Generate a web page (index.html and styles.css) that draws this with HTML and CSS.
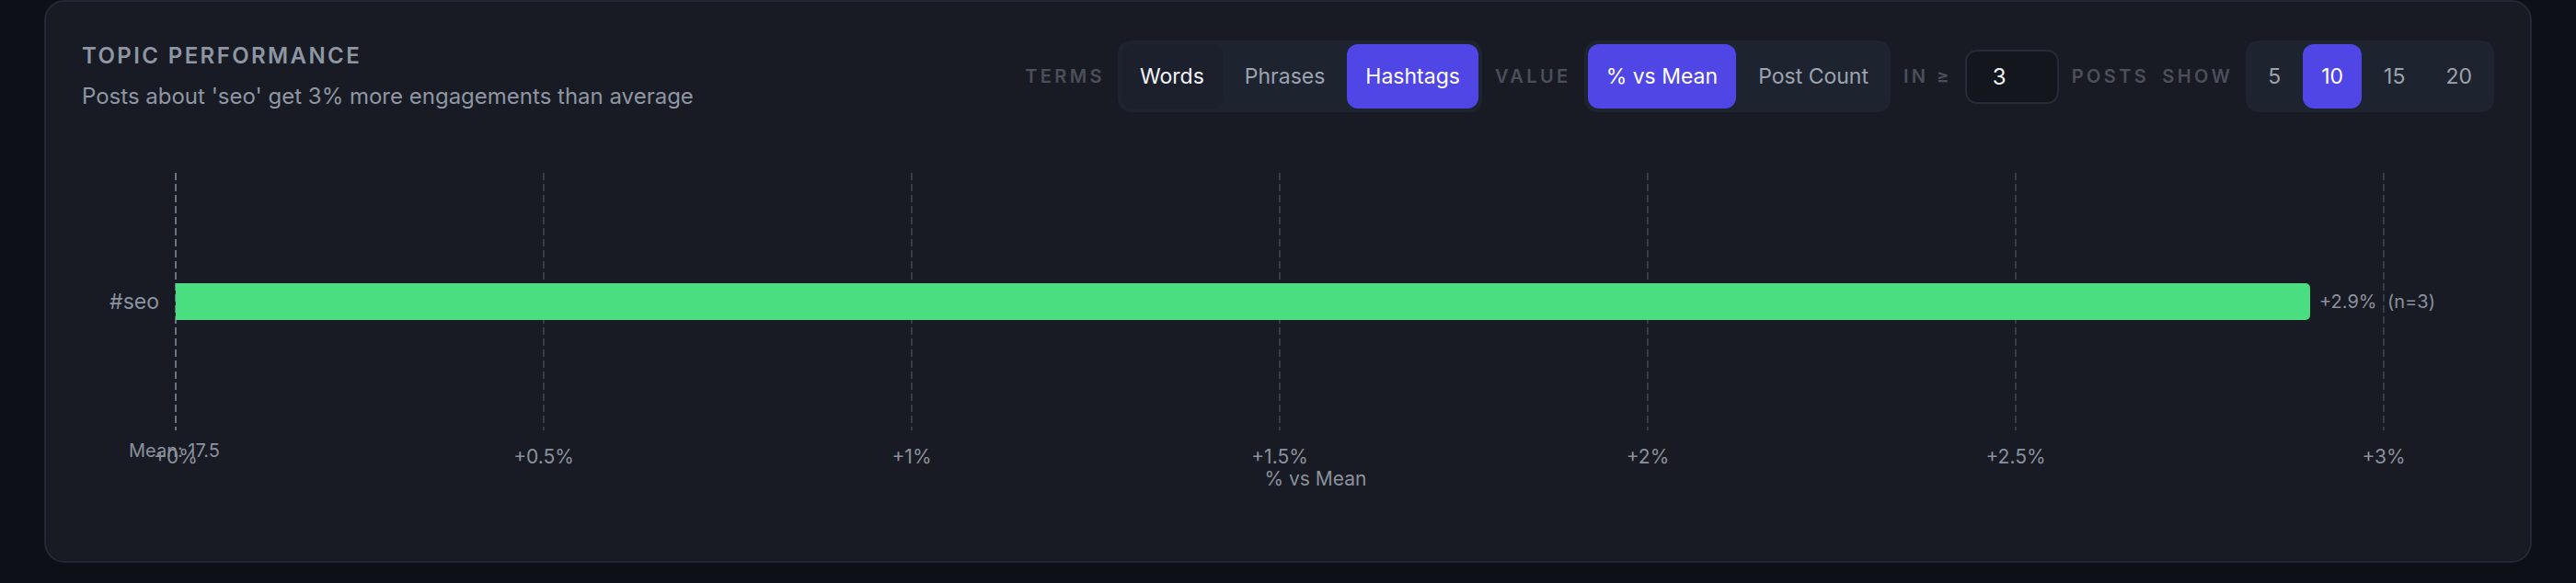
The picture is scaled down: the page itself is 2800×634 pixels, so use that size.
FILE: index.html
```html
<!DOCTYPE html>
<html lang="en">
<head>
    <meta charset="UTF-8">
    <meta name="viewport" content="width=device-width, initial-scale=1.0">
    <title>Topic Performance</title>
    <link rel="stylesheet" href="styles.css">
</head>
<body>
    <div class="card">
        <div class="card-header">
            <div class="heading">
                <h2>Topic Performance</h2>
                <p>Posts about 'seo' get 3% more engagements than average</p>
            </div>
            <div class="controls">
                <span class="ctl-label">Terms</span>
                <div class="seg">
                    <button class="seg-btn hover">Words</button>
                    <button class="seg-btn">Phrases</button>
                    <button class="seg-btn active">Hashtags</button>
                </div>
                <span class="ctl-label">Value</span>
                <div class="seg">
                    <button class="seg-btn active">% vs Mean</button>
                    <button class="seg-btn">Post Count</button>
                </div>
                <span class="ctl-label">In ≥</span>
                <input class="min-input" type="text" value="3">
                <span class="ctl-label">Posts</span>
                <span class="ctl-label">Show</span>
                <div class="seg">
                    <button class="seg-btn num">5</button>
                    <button class="seg-btn num active">10</button>
                    <button class="seg-btn num">15</button>
                    <button class="seg-btn num">20</button>
                </div>
            </div>
        </div>

        <svg class="chart" viewBox="0 0 2622 420" width="2622" height="420">
            <!-- grid -->
            <g class="grid">
                <line x1="502" y1="48" x2="502" y2="328"></line>
                <line x1="902" y1="48" x2="902" y2="328"></line>
                <line x1="1302" y1="48" x2="1302" y2="328"></line>
                <line x1="1702" y1="48" x2="1702" y2="328"></line>
                <line x1="2102" y1="48" x2="2102" y2="328"></line>
                <line x1="2502" y1="48" x2="2502" y2="328"></line>
            </g>
            <line class="zero-line" x1="102" y1="48" x2="102" y2="328"></line>

            <!-- bar: 2.9 / 3 * 2400 -->
            <path class="bar" d="M102 168 H2417 a5 5 0 0 1 5 5 V203 a5 5 0 0 1 -5 5 H102 Z"></path>
            <text class="row-label" x="84" y="196" text-anchor="end">#seo</text>
            <text class="val-label" x="2432" y="195">+2.9%</text>
            <text class="val-label" x="2506" y="195">(n=3)</text>

            <!-- x axis -->
            <g class="tick">
                <text x="102" y="364" text-anchor="middle">+0%</text>
                <text x="502" y="364" text-anchor="middle">+0.5%</text>
                <text x="902" y="364" text-anchor="middle">+1%</text>
                <text x="1302" y="364" text-anchor="middle">+1.5%</text>
                <text x="1702" y="364" text-anchor="middle">+2%</text>
                <text x="2102" y="364" text-anchor="middle">+2.5%</text>
                <text x="2502" y="364" text-anchor="middle">+3%</text>
            </g>
            <text class="mean-label" x="51" y="357">Mean: 17.5</text>
            <text class="axis-title" x="1341" y="388" text-anchor="middle">% vs Mean</text>
        </svg>
    </div>
</body>
</html>
```
FILE: styles.css
```css
body {
    margin: 0;
    padding: 0 48px;
    background: #0d1017;
    font-family: Inter, "Noto Sans", sans-serif;
}
.card {
    background: #181b23;
    border: 2px solid #222835;
    border-radius: 22px;
    padding: 42px 39px 50px 39px;
}
.card-header {
    display: flex;
    justify-content: space-between;
    align-items: center;
    height: 78px;
}
.heading h2 {
    margin: 0;
    font-size: 24px;
    line-height: 32px;
    font-weight: 600;
    letter-spacing: 2.4px;
    text-transform: uppercase;
    color: #8f96a3;
}
.heading p {
    margin: 12px 0 0;
    font-size: 24px;
    line-height: 32px;
    color: #8f96a3;
}
.controls {
    display: flex;
    align-items: center;
    gap: 14px;
}
.ctl-label {
    font-size: 20px;
    font-weight: 600;
    letter-spacing: 3.4px;
    text-transform: uppercase;
    color: #4a4f5a;
}
.seg {
    display: flex;
    gap: 4px;
    padding: 4px;
    background: #1e2330;
    border-radius: 14px;
}
.seg-btn {
    height: 70px;
    padding: 0 20px;
    border: none;
    border-radius: 12px;
    background: transparent;
    color: #9ca3af;
    font-family: Inter, "Noto Sans", sans-serif;
    font-size: 23px;
    cursor: pointer;
}
.seg-btn.num {
    min-width: 53px;
}
.seg-btn.hover {
    background: #1c202c;
    color: #f3f4f6;
}
.seg-btn.active {
    background: #4f46e5;
    color: #ffffff;
}
.min-input {
    box-sizing: border-box;
    width: 102px;
    height: 59px;
    padding: 0 28px;
    background: #13161d;
    border: 2px solid #252b38;
    border-radius: 13px;
    color: #f3f4f6;
    font-family: Inter, "Noto Sans", sans-serif;
    font-size: 24px;
    outline: none;
}
.chart {
    display: block;
    margin-top: 18px;
    width: 100%;
    height: 420px;
    font-family: Inter, "Noto Sans", sans-serif;
}
.grid line {
    stroke: #363b45;
    stroke-width: 2;
    stroke-dasharray: 8 4;
}
.zero-line {
    stroke: #6b7280;
    stroke-width: 2;
    stroke-dasharray: 8 4;
}
.bar {
    fill: #4ade80;
}
.row-label {
    font-size: 23px;
    fill: #8b92a0;
}
.val-label {
    font-size: 20px;
    fill: #8b919c;
}
.tick text {
    font-size: 21px;
    fill: #8b919c;
}
.mean-label {
    font-size: 20px;
    fill: #8b919c;
}
.axis-title {
    font-size: 21px;
    fill: #8b919c;
}
```
